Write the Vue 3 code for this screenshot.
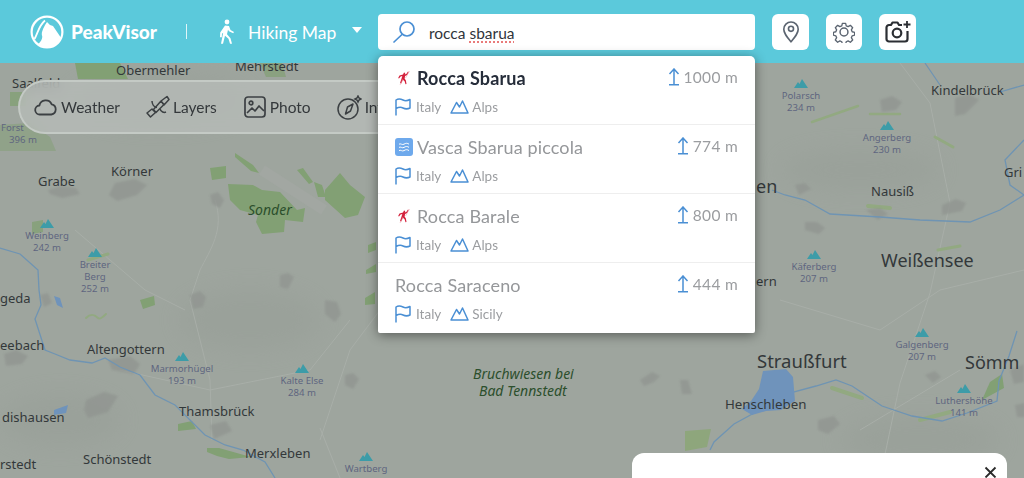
<script setup>
const towns = [
  { t: 'Obermehler', x: 116, y: 70, s: 13 }, { t: 'Mehrstedt', x: 235, y: 66, s: 13 }, { t: 'Saalfeld', x: 12, y: 83, s: 13 },
  { t: 'Körner', x: 111, y: 171, s: 13 }, { t: 'Grabe', x: 38, y: 181, s: 13 }, { t: 'geda', x: 0, y: 298, s: 13 },
  { t: 'eebach', x: 0, y: 345, s: 13 }, { t: 'Altengottern', x: 87, y: 349, s: 13 }, { t: 'Thamsbrück', x: 179, y: 411, s: 13 },
  { t: 'dishausen', x: 2, y: 417, s: 13 }, { t: 'Merxleben', x: 245, y: 453, s: 13 }, { t: 'Schönstedt', x: 83, y: 459, s: 13 },
  { t: 'rstedt', x: 0, y: 464, s: 13 }, { t: 'Kindelbrück', x: 931, y: 90, s: 13 }, { t: 'Nausiß', x: 871, y: 191, s: 13 },
  { t: 'Gri', x: 1004, y: 172, s: 13 }, { t: 'en', x: 756, y: 186, s: 18 }, { t: 'ern', x: 756, y: 281, s: 13 },
  { t: 'Weißensee', x: 881, y: 260, s: 18 }, { t: 'Straußfurt', x: 757, y: 360, s: 18.500 }, { t: 'Henschleben', x: 725, y: 404, s: 13.300 },
  { t: 'Sömm', x: 965, y: 362, s: 18 },
]
const greens = [
  { t: 'Sonder', x: 248, y: 209, s: 14 },
  { t: 'Bruchwiesen bei', x: 473, y: 373, s: 14 },
  { t: 'Bad Tennstedt', x: 479, y: 390, s: 14 },
]
const peaks = [
  { l: ['Polarsch', '234 m'], x: 801, y: 83 }, { l: ['Angerberg', '230 m'], x: 887, y: 125 },
  { l: ['Käferberg', '207 m'], x: 814, y: 254 }, { l: ['Galgenberg', '207 m'], x: 922, y: 332 },
  { l: ['Luthershöhe', '141 m'], x: 964, y: 388 }, { l: ['Weinberg', '242 m'], x: 47, y: 223 },
  { l: ['Breiter', 'Berg', '252 m'], x: 95, y: 252 }, { l: ['Marmorhügel', '193 m'], x: 182, y: 356 },
  { l: ['Kalte Else', '284 m'], x: 302, y: 368 }, { l: ['Wartberg'], x: 366, y: 456 },
]
const blobs = [
  'M48 190l14-4 14 2 4 6-18 4-12-4z','M115 183l20-4 12 6-10 10-20 6-8-6z','M210 195l8-3 6 8-4 8-8-4z',
  'M190 295l10-4 6 6-3 10-10 2z','M280 275l8-2 6 4-6 12-8-2z','M325 300l12 2 4 12-6 8-10-8z','M108 360l22-4 10 8-6 10-22-4z',
  'M86 400l18-8 14 4-10 16-20 6-4-8z','M4 354l12-4 12 6-6 8-16 2z','M210 425l16-4 6 10-18 8z','M345 375l8-2 6 6-6 10-8-4z',
  'M880 100l12-4 10 6-6 8-14 2z','M955 98l14-4 10 6-14 14-10 2z','M795 185l10-2 6 6-12 6z','M942 205l14-6 10 4-4 8-20 4z',
  'M805 222l12 0 8 6-6 6-14-4z','M640 380l12-8 8 4-6 6-10 4z','M818 420l16-4 6 8-12 10-10-4z','M925 375l10-4 6 6-8 6z',
  'M1010 370l14-6 0 18-10 2z','M1015 405l10-2 0 14-8 0z','M680 380l8 0 4 14-10 0z','M866 210l14-2 8 6-10 6z','M40 295l8-2 4 10-8 4z',
]
const pageRows = [
  { name: 'Rocca Sbarua', kind: 'climb', ele: '1000 m', range: 'Alps', first: true },
  { name: 'Vasca Sbarua piccola', kind: 'water', ele: '774 m', range: 'Alps' },
  { name: 'Rocca Barale', kind: 'climb', ele: '800 m', range: 'Alps' },
  { name: 'Rocca Saraceno', kind: 'none', ele: '444 m', range: 'Sicily' },
]
const tools = ['Weather', 'Layers', 'Photo', 'Info']
</script>

<template>
  <div class="page">
    <div class="map">
      <svg class="terrain" viewBox="0 0 1024 478" width="1024" height="478">
        <defs><filter id="soft"><feGaussianBlur stdDeviation="1" /></filter><filter id="wide"><feGaussianBlur stdDeviation="12" /></filter></defs>
        <g filter="url(#wide)" fill="#959c95" opacity=".45">
          <ellipse cx="160" cy="100" rx="90" ry="24" /><ellipse cx="250" cy="320" rx="70" ry="30" /><ellipse cx="860" cy="170" rx="80" ry="20" /><ellipse cx="920" cy="440" rx="80" ry="24" /><ellipse cx="60" cy="420" rx="60" ry="25" />
        </g>
        <g fill="none" stroke="#a8aea8" stroke-width="1">
          <path d="M215 200c10 30-5 50-15 70M200 270l-10 30 20 80 2 60M75 230l70 60 40 20M120 370l90 20 100-20 40-50M320 440l30-90 30-40M340 478l-20-50M900 63l30 40 20 100-20 90-30 90-20 95M780 300l100 30 60-40 84-20M860 430l100-60" />
        </g>
        <g fill="#82a074">
          <path d="M228 184l25 1 9 5 18 2 17 18 8-2-2 14-18-2-1 12-22 2-6-12 2-7-18-5-10-10z" />
          <path d="M297 170l6-2 10 14-4 2zM314 182l8 3 4 12-8 0zM325 190l15-17 10 12 15 12-7 18-13 3-20-18z" />
          <path d="M210 168l16-2 0 12-14 2zM235 153l18 12 6 8-8-2-16-14z" />
          <path d="M368 245l8-3 0 8-8 3zM366 270l10-6 0 8-10 2zM365 298l10-6 0 12-10 1z" />
          <path d="M75 63h45l8 16h-50z" /><path d="M260 63h22l4 14h-20z" opacity=".7" />
          <path d="M10 92h16v14h-16z" opacity=".8" /><path d="M140 300l14-4 1 9-12 4z" />
          <path d="M32 222l11-2 0 12-11 2z" opacity=".8" /><path d="M178 424l14-3 4 8-18 2z" /><path d="M207 448l12 0 32 9-22 2-12-3-10-4z" />
          <path d="M0 125l30-2 20 14 6 14-56 0z" opacity=".5" />
        </g>
        <path d="M262 170l62 40" stroke="#a2a7a2" stroke-width="11" fill="none" />
        <g fill="none" stroke="#92a981" stroke-width="3" stroke-linecap="round">
          <path d="M88 260l20-6" /><path d="M86 318c6-6 10-2 12 0s6-2 8-4" stroke-width="2" />
          <path d="M812 122l46-16M870 114h30" stroke-width="2.500" /><path d="M868 206l22 2" stroke-width="4" />
          <path d="M935 137l18 10" /><path d="M938 250l22-4" />
          <path d="M832 388l30 10M920 420l30-8" stroke-width="4" />
        </g>
        <path d="M685 431l26-2-4 18-22 4z" fill="#8ea67c" />
        <path d="M982 400l22-12 -2 -14 -12 8z" fill="#82a074" />
        <g fill="#909490" filter="url(#soft)" opacity=".75"><path v-for="b in blobs" :key="b" :d="b" /></g>
        <g fill="none" stroke="#6f94b3" stroke-width="1.300">
          <path d="M0 248l20 6 18 16 1 20 2 15-6 14 10 31 10 4 15 6 22 3 13-5 15 9 20 8 15 20 20 10 15 15 15 15 20 10 18 5 22 12 10 16" />
          <path d="M772 190l13 5 20 5 25 14 50 3 40 3 50 2 30-12 24-15" />
          <path d="M1024 140l-19 20 5 25 14 10" /><path d="M925 63l15 22M1024 85l-24 7" />
          <path d="M710 450l4-8 20-18 22-12 30-18 30-8 20-6 16 6 15 10 15 10 30 10 30 5 25-8 30-12 2-20 10-25 8-25" />
        </g>
        <path d="M763 371l23-2 7 8 2 24-14 9-15 1-14 4-10-6 9-8 8-12z" fill="#6f93bb" />
        <path d="M54 296l6 2 3 10-6-3z M54 410l14-5-2 8-12 2z" fill="#6f93bb" />
      </svg>
      <span v-for="t in towns" :key="t.t" class="town" :style="{ left: t.x + 'px', top: t.y + 'px', fontSize: t.s + 'px' }">{{ t.t }}</span>
      <span v-for="t in greens" :key="t.t" class="town green" :style="{ left: t.x + 'px', top: t.y + 'px', fontSize: t.s + 'px' }">{{ t.t }}</span>
      <div v-for="p in peaks" :key="p.l[0]" class="peak" :style="{ left: p.x + 'px', top: p.y + 'px' }">
        <svg width="14" height="9" viewBox="0 0 14 9"><path d="M0 9l4-6 1.500 2L8 0l6 9z" fill="#3d9ca8" /></svg>
        <span v-for="l in p.l" :key="l">{{ l }}</span>
      </div>
      <div class="forst"><span>Forst</span><span>396 m</span></div>

      <div class="tools">
        <div v-for="t in tools" :key="t" class="tool">
          <svg v-if="t === 'Weather'" width="25" height="24" viewBox="0 0 24 24" fill="none" stroke="#3c4043" stroke-width="1.800"><path d="M6.500 19.500a4.500 4.500 0 0 1-.6-9 6.500 6.500 0 0 1 12.300-1.200 5.200 5.200 0 0 1-.4 10.200z" stroke-linejoin="round" /></svg>
          <svg v-else-if="t === 'Layers'" width="24" height="24" viewBox="0 0 24 24" fill="none" stroke="#3c4043" stroke-width="1.500" stroke-linejoin="round"><path d="M1 18l5-4 3.500 3.500-5 4.500zM15 6l6-4.500 2 3-5 5.500zM7.500 14.500l7.500-8.500 3 3.500-8 8z" /><path d="M6 6c0 3 2 6 5 6.500M14 14c1 3 4 4 6 3" /></svg>
          <svg v-else-if="t === 'Photo'" width="24" height="24" viewBox="0 0 24 24" fill="none" stroke="#3c4043" stroke-width="1.700" stroke-linejoin="round"><rect x="2" y="2" width="20" height="20" rx="3" /><circle cx="8" cy="8" r="1.800" /><path d="M4 18l5-5 3 3 4-5 5 5" /></svg>
          <svg v-else width="25" height="25" viewBox="0 0 25 25" fill="none" stroke="#3c4043" stroke-width="1.500"><circle cx="11" cy="14" r="10" /><path d="M16 9l-2.500 7-5 3 2-7z" stroke-linejoin="round" /><path d="M21 1l1 2 2 1-2 1-1 2-1-2-2-1 2-1z" /></svg>
          <span>{{ t }}</span>
        </div>
      </div>

      <div class="sheet">
        <svg class="close" width="13" height="13" viewBox="0 0 13 13"><path d="M1.500 1.500l10 10M11.500 1.500l-10 10" stroke="#2a2a2a" stroke-width="1.800" /></svg>
      </div>
    </div>

    <header class="bar">
      <div class="brand">
        <svg width="34" height="34" viewBox="0 0 34 34"><circle cx="17" cy="17" r="15.400" fill="none" stroke="#fff" stroke-width="2.200" /><path d="M17 7l3 3 3 1 8.500 12.500A15.400 15.400 0 0 1 8 29.500c3-3 5-6 4-9s2-9 5-13.500z" fill="#fff" /><path d="M4.500 24C8 18 8.500 11 15 5.500" fill="none" stroke="#fff" stroke-width="1.800" /></svg>
        <b>PeakVisor</b>
      </div>
      <i class="rule"></i>
      <div class="mode">
        <svg width="18" height="25" viewBox="0 0 18 25" fill="#fff"><circle cx="10" cy="3" r="2.400" /><path d="M8 6.500l4 .5 1.500 4 3.500 2-.8 1.300-4.200-2-1-1.500-1 4.500 3.500 4 1.500 5.500h-2l-1.500-5-3.500-3-2 8H4l2.200-11-1.200 1-.2 3.500H3l.2-4.800z" /></svg>
        <span>Hiking Map</span>
        <svg class="caret" width="10" height="6" viewBox="0 0 10 6"><path d="M0 0h10L5 6z" fill="#fff" /></svg>
      </div>
      <div class="search">
        <svg width="24" height="24" viewBox="0 0 24 24" fill="none" stroke="#4a8fd4" stroke-width="1.700" stroke-linecap="round"><circle cx="15" cy="9" r="7" /><path d="M10 14.500L2 22" /></svg>
        <span class="query">rocca <u>sbarua</u></span>
      </div>
      <button class="square"><svg width="18" height="23" viewBox="0 0 20 25" fill="none" stroke="#5b6470" stroke-width="1.800"><path d="M10 24C5 18 2 14.500 2 10a8 8 0 0 1 16 0c0 4.500-3 8-8 14z" stroke-linejoin="round" /><circle cx="10" cy="9.500" r="2.800" /></svg></button>
      <button class="square mid"><svg width="22" height="22" viewBox="0 0 24 24" fill="none" stroke="#5b6470" stroke-width="1.600" stroke-linejoin="round"><circle cx="12" cy="12" r="4.300" /><path d="M10 1.500h4l.7 3 2.300 1 2.700-1.600 2.800 2.900-1.600 2.600 1 2.300 3 .7v3.500l-3 .7-1 2.300 1.600 2.700-2.800 2.800-2.700-1.600-2.300 1-.7 3h-4l-.7-3-2.300-1-2.700 1.600-2.800-2.800 1.600-2.700-1-2.300-3-.7v-3.500l3-.7 1-2.300-1.600-2.600 2.800-2.900 2.700 1.600 2.300-1z" transform="translate(1.200 1.200) scale(.9)" /></svg></button>
      <button class="square"><svg width="26" height="24" viewBox="0 0 26 24" fill="none" stroke="#2b2e33" stroke-width="2.200" stroke-linejoin="round"><path d="M17 5h-3l-1.500-2.500h-5L6 5H4a2.500 2.500 0 0 0-2.500 2.500V19A2.500 2.500 0 0 0 4 21.500h16a2.500 2.500 0 0 0 2.500-2.500v-8" /><circle cx="12" cy="13" r="4.300" /><path d="M22 1v7M18.500 4.500h7" stroke-width="1.800" /></svg></button>
    </header>

    <div class="results">
      <div v-for="r in pageRows" :key="r.name" class="row">
        <div class="line">
          <svg v-if="r.kind === 'climb'" class="kind" width="13" height="14" viewBox="0 0 13 14" fill="#d4203b"><path d="M7 1.500l1.300.6-.5 1.500 1.700-.8 1.500-2.300.7.5-1.600 3-2 1-.5 2.500 1.300 2 .6 3.500-1 .2-.9-3-1.700-1.400-1.700 3.700-1.200-.5 1.400-4 .9-3-1.700.4L2 7.500l-.8-.5 1.300-2.400L6 3.400z" /><path d="M12.500 0L8.500 7M6 8l-3 6" stroke="#e8909c" stroke-width=".5" fill="none" /></svg>
          <svg v-else-if="r.kind === 'water'" class="kind wave" width="18" height="18" viewBox="0 0 18 18"><rect width="18" height="18" rx="3" fill="#6ea9ec" /><path d="M4 6.200c1.500-1.200 3.300 1.200 5 0s3.500-1.200 5 0M4 9.400c1.500-1.200 3.300 1.200 5 0s3.500-1.200 5 0M4 12.600c1.500-1.200 3.300 1.200 5 0s3.500-1.200 5 0" fill="none" stroke="#fff" stroke-width="1" /></svg>
          <span class="name" :class="{ strong: r.first }">{{ r.name }}</span>
          <svg class="up" width="12" height="18" viewBox="0 0 12 18" fill="none" stroke="#4a8fd4" stroke-width="1.500"><path d="M1.500 6L6 1l4.500 5M6 1v15.500M1 16.700h10" /></svg>
          <span class="ele">{{ r.ele }}</span>
        </div>
        <div class="meta">
          <svg width="16" height="18" viewBox="0 0 16 18" fill="none" stroke="#4a8fd4" stroke-width="1.500" stroke-linejoin="round"><path d="M1 17.500V2c3-2 5-1 7 0s4 1 7-.5V10c-3 1.500-5 1-7 0s-4-1-7 .5" /></svg>
          <span>Italy</span>
          <svg class="mtn" width="19" height="14" viewBox="0 0 19 14" fill="none" stroke="#4a8fd4" stroke-width="1.500" stroke-linejoin="round"><path d="M1 13L6.500 2.500 9.500 7 12.500 1 18 13z" /></svg>
          <span class="range">{{ r.range }}</span>
        </div>
      </div>
    </div>
  </div>
</template>

<style>
html, body { margin: 0; background: #9ea59e; overflow: hidden; }
</style>

<style scoped>
.page { position: relative; width: 1024px; height: 478px; overflow: hidden; font-family: Lato, "Open Sans", sans-serif; }
.bar { position: relative; display: flex; align-items: center; height: 63px; padding-left: 30px; box-sizing: border-box; background: #5bc9db; }
.brand { display: flex; align-items: center; gap: 7px; width: 128px; color: #fff; }
.brand b { font-size: 19px; font-weight: 900; letter-spacing: 0; }
.rule { width: 1px; height: 15px; margin: 0 30px 0 28px; background: #dff5f8; }
.mode { display: flex; align-items: center; width: 161px; color: #fff; font-size: 17.500px; }
.mode span { margin-left: 13px; padding-top: 2px; }
.caret { margin-left: 16px; margin-top: -3px; }
.search { display: flex; align-items: center; width: 377px; height: 36px; margin-right: 17px; padding-left: 14px; box-sizing: border-box; background: #fff; border-radius: 4px; }
.query { margin-left: 13px; padding-top: 2px; font-size: 15.500px; color: #30343a; }
.query u { text-decoration: underline dotted #e2504f; text-decoration-skip-ink: none; text-underline-offset: 3px; }
.square { display: flex; align-items: center; justify-content: center; width: 37px; height: 36px; margin-right: 17px; padding: 0; border: 0; background: #fff; border-radius: 6px; }
.square.mid { width: 36px; }
.map { position: absolute; inset: 0; background: #9ea59e; }
.terrain { position: absolute; left: 0; top: 0; }
.town { position: absolute; transform: translateY(-50%); white-space: nowrap; font-family: "Noto Sans", sans-serif; color: #33383a; }
.green { font-style: italic; color: #2c4f2c; }
.peak { position: absolute; display: flex; flex-direction: column; align-items: center; width: 90px; margin-left: -45px; margin-top: -4px; font: 9.600px/12px "Noto Sans", sans-serif; color: #5f6680; }
.peak svg { margin-bottom: 2px; }
.forst { position: absolute; left: 1px; top: 122px; display: flex; flex-direction: column; align-items: flex-end; width: 36px; font: 9.600px/12px "Noto Sans", sans-serif; color: #5f6680; }
.forst span:first-child { align-self: flex-start; }
.tools { position: absolute; left: 18px; top: 80px; display: flex; align-items: center; gap: 26px; width: 420px; height: 54px; padding-left: 13px; box-sizing: border-box; border: 2px solid #c4cac5; border-right: 0; border-radius: 27px; background: rgba(186, 191, 188, .7); backdrop-filter: blur(7px); }
.tool { display: flex; align-items: center; gap: 3px; font-size: 15.500px; color: #34383b; }
.sheet { position: absolute; left: 632px; top: 453px; width: 375px; height: 60px; background: #fff; border-radius: 12px; }
.close { position: absolute; right: 10px; top: 13px; }
.results { position: absolute; left: 378px; top: 56px; width: 377px; height: 277px; display: flex; flex-direction: column; background: #fff; border-radius: 5px 5px 2px 2px; box-shadow: 0 2px 12px rgba(0, 0, 0, .45); }
.row { display: flex; flex-direction: column; flex: none; height: 69px; padding: 8px 17px 0; box-sizing: border-box; border-bottom: 1px solid #eeeeee; }
.row:last-child { flex: 1; border-bottom: 0; }
.line { display: flex; align-items: center; height: 27px; }
.kind { margin-right: 7px; margin-left: 2px; }
.wave { margin-left: 0; margin-right: 4px; }
.name { flex: 1; font-size: 18px; color: #95979a; letter-spacing: .15px; }
.name.strong { color: #262d3a; font-weight: 700; }
.up { margin-right: 4px; margin-top: -2px; }
.ele { font-size: 15.500px; color: #9b9da0; letter-spacing: .3px; margin-top: -2px; }
.meta { display: flex; align-items: center; height: 24px; margin-top: 4px; font-size: 13.500px; color: #9b9da0; }
.meta span { margin-left: 5px; }
.meta .range { margin-left: 3px; }
.mtn { margin-left: 9px; }
</style>
